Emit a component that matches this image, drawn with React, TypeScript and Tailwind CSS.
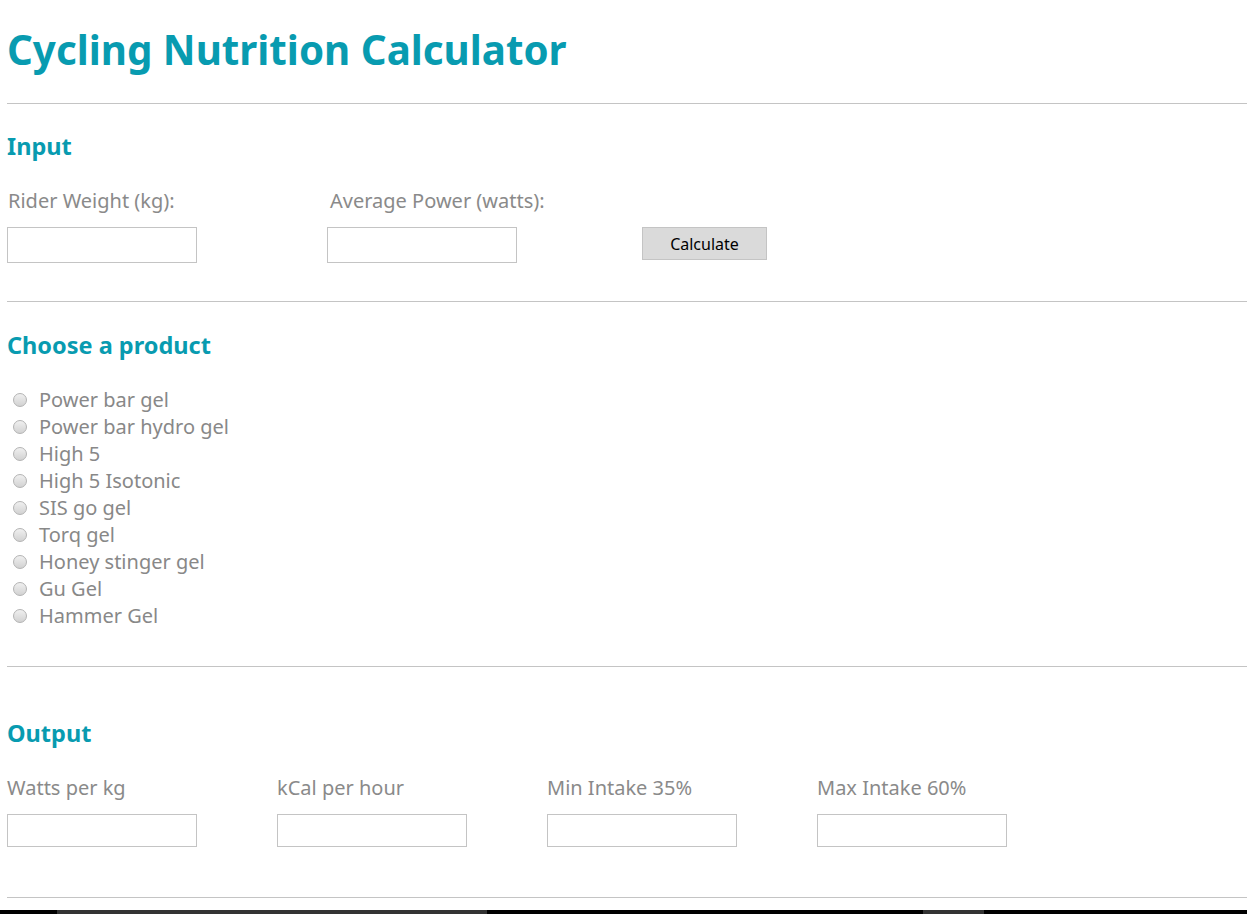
import React from "react";

// Products shown in the radio list
const PRODUCTS = [
  "Power bar gel",
  "Power bar hydro gel",
  "High 5",
  "High 5 Isotonic",
  "SIS go gel",
  "Torq gel",
  "Honey stinger gel",
  "Gu Gel",
  "Hammer Gel",
];

const OUTPUTS = ["Watts per kg", "kCal per hour", "Min Intake 35%", "Max Intake 60%"];

const Rule = () => <div className="h-px bg-[#c4c4c4] w-full" />;

const SectionTitle = ({ children }: { children: React.ReactNode }) => (
  <h2 className="text-[23.5px] leading-[30px] font-bold text-[#089bb0]">{children}</h2>
);

export default function App() {
  return (
    <div className="min-h-[914px] bg-white flex flex-col font-['Noto_Sans','Open_Sans',sans-serif]">
      <div className="pl-[7px] flex flex-col">
        <h1 className="mt-[25px] text-[40.3px] leading-[50px] font-bold text-[#089bb0]">
          Cycling Nutrition Calculator
        </h1>

        <div className="mt-[28px]">
          <Rule />
        </div>

        {/* Input section */}
        <div className="mt-[27px]">
          <SectionTitle>Input</SectionTitle>
        </div>
        <div className="mt-[28px] flex items-start">
          <div className="w-[320px] flex flex-col">
            <label className="text-[20px] leading-[24px] text-[#8a8a8a] pl-px">Rider Weight (kg):</label>
            <input className="mt-[14px] w-[190px] h-[36px] border border-[#c4c4c4] bg-white outline-none" />
          </div>
          <div className="w-[315px] flex flex-col">
            <label className="text-[20px] leading-[24px] text-[#8a8a8a] pl-[3px]">Average Power (watts):</label>
            <input className="mt-[14px] w-[190px] h-[36px] border border-[#c4c4c4] bg-white outline-none" />
          </div>
          <div className="pt-[38px]">
            <button className="w-[125px] h-[33px] bg-[#dadada] border border-[#c4c4c4] text-[16px] text-black">
              Calculate
            </button>
          </div>
        </div>

        <div className="mt-[38px]">
          <Rule />
        </div>

        {/* Product section */}
        <div className="mt-[28px]">
          <SectionTitle>Choose a product</SectionTitle>
        </div>
        <div className="mt-[26px] flex flex-col">
          {PRODUCTS.map((p) => (
            <label key={p} className="flex items-center h-[27px] text-[20px] text-[#888888]">
              <input
                type="radio"
                name="product"
                className="appearance-none ml-[6px] w-[14px] h-[14px] rounded-full border border-[#b3b3b3] bg-linear-to-b from-[#f0f0f0] to-[#d2d2d2]"
              />
              <span className="ml-[12px]">{p}</span>
            </label>
          ))}
        </div>

        <div className="mt-[37px]">
          <Rule />
        </div>

        {/* Output section */}
        <div className="mt-[51px]">
          <SectionTitle>Output</SectionTitle>
        </div>
        <div className="mt-[28px] flex">
          {OUTPUTS.map((o) => (
            <div key={o} className="w-[270px] flex flex-col">
              <label className="text-[20px] leading-[24px] text-[#8a8a8a]">{o}</label>
              <input className="mt-[14px] w-[190px] h-[33px] border border-[#c4c4c4] bg-white outline-none" />
            </div>
          ))}
        </div>

        <div className="mt-[50px]">
          <Rule />
        </div>
      </div>

      <div className="mt-[12px] h-[4px] flex bg-black">
        <div className="w-[57px]" />
        <div className="w-[430px] bg-[#333333]" />
        <div className="w-[436px]" />
        <div className="w-[61px] bg-[#333333]" />
      </div>
    </div>
  );
}
